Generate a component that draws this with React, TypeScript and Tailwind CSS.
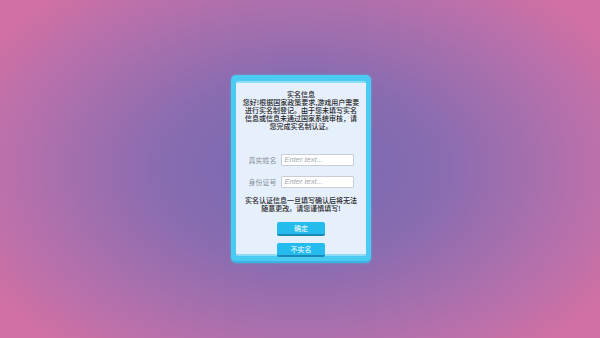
import React from "react";

const cjk = { fontFamily: '"Noto Sans CJK SC", "Noto Sans", sans-serif' };

function Field({ label }: { label: string }) {
  return (
    <div className="flex items-center justify-center gap-[4px]">
      <span className="w-[28px] text-[7px] leading-[8px] text-[#8a8f99]" style={cjk}>
        {label}
      </span>
      <div className="flex h-[12px] w-[73px] items-center rounded-[1px] border border-[#c9ced6] bg-white px-[3px]">
        <span className="text-[7.5px] italic leading-[8px] text-[#a3a8b0]" style={{ fontFamily: '"Liberation Sans", Arial, sans-serif' }}>
          Enter text...
        </span>
      </div>
    </div>
  );
}

function Btn({ children }: { children: React.ReactNode }) {
  return (
    <div className="flex h-[14px] w-[48px] items-center justify-center rounded-[2px] border-b-2 border-[#1888b8] bg-[#24bcec] text-[7px] leading-[8px] text-white" style={cjk}>
      {children}
    </div>
  );
}

export default function App() {
  return (
    <div className="flex h-[338px] w-[600px] items-center justify-center bg-[radial-gradient(ellipse_60%_70%_at_50%_50%,#7468b2_0%,#8a6cb0_40%,#b270ac_75%,#d070a4_100%)]">
      <div className="ml-[2px] h-[188px] w-[140px] rounded-[5px] border-b-2 border-[#3ab4e0] bg-[#4ccbf2] px-[5px] pb-[5px] pt-[6px] shadow-[0_0_3px_rgba(80,200,240,0.6)]">
        <div className="flex h-full flex-col items-center rounded-[2px] border-t-2 border-b-2 border-[#8edcf6] bg-[#e6f0fd]">
          <div className="mt-[7px] text-center text-[7px] font-medium leading-[8px] text-[#262626]" style={cjk}>
            实名信息
            <br />
            您好!根据国家政策要求,游戏用户需要
            <br />
            进行实名制登记。由于您未填写实名
            <br />
            信息或信息未通过国家系统审核，请
            <br />
            您完成实名制认证。
          </div>
          <div className="mt-[24px] flex flex-col gap-[10px]">
            <Field label="真实姓名" />
            <Field label="身份证号" />
          </div>
          <div className="mt-[8px] text-center text-[7px] font-medium leading-[8px] text-[#262626]" style={cjk}>
            实名认证信息一旦填写确认后将无法
            <br />
            随意更改。请您谨慎填写!
          </div>
          <div className="mt-[10px]">
            <Btn>确定</Btn>
          </div>
          <div className="mt-[7px]">
            <Btn>不实名</Btn>
          </div>
        </div>
      </div>
    </div>
  );
}
